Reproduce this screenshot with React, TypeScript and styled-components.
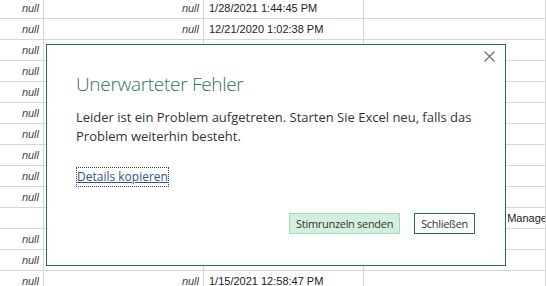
import React from "react";
import styled, { createGlobalStyle } from "styled-components";

const Global = createGlobalStyle`
  html, body { margin: 0; padding: 0; background: #fff; }
  body { width: 546px; height: 286px; overflow: hidden; position: relative; }
  * { box-sizing: border-box; }
`;

const Page = styled.div`
  position: relative;
  width: 546px;
  height: 286px;
  overflow: hidden;
  background: #fff;
`;

const Sheet = styled.div`
  display: grid;
  grid-template-columns: 44px 160px 160px 1fr;
  grid-auto-rows: 21px;
  margin-top: -2px;
  font-family: "Liberation Sans", Arial, sans-serif;
  font-size: 11px;
  color: #222;
`;

const Cell = styled.div<{ $align?: "left" | "right"; $italic?: boolean }>`
  border-right: 1px solid #d6d6d6;
  border-bottom: 1px solid #d6d6d6;
  display: flex;
  align-items: center;
  justify-content: ${(p) => (p.$align === "right" ? "flex-end" : "flex-start")};
  padding: 0 4px 0 5px;
  white-space: nowrap;
  overflow: hidden;
  font-style: ${(p) => (p.$italic ? "italic" : "normal")};
  color: ${(p) => (p.$italic ? "#444" : "#222")};
`;

type Row = { a?: string; b?: string; c?: string; d?: string };

const rows: Row[] = [
  { a: "null", b: "null", c: "1/28/2021 1:44:45 PM" },
  { a: "null", b: "null", c: "12/21/2020 1:02:38 PM" },
  { a: "null" },
  { a: "null" },
  { a: "null" },
  { a: "null" },
  { a: "null" },
  { a: "null" },
  { a: "null" },
  { a: "null" },
  { d: "Dynamics 365 Portal Admin Manager" },
  { a: "null" },
  { a: "null" },
  { a: "null", b: "null", c: "1/15/2021 12:58:47 PM" },
];

const Overlay = styled.div`
  position: absolute;
  left: 46px;
  top: 44px;
  width: 460px;
  height: 222px;
  background: #fff;
  border: 1px solid #217346;
  padding: 25px 30px 0 29px;
  display: flex;
  flex-direction: column;
  font-family: "Open Sans", "Noto Sans", sans-serif;
`;

const CloseButton = styled.button`
  position: absolute;
  top: 6px;
  right: 10px;
  width: 11px;
  height: 11px;
  padding: 0;
  border: none;
  background: transparent;
  display: flex;
`;

const Title = styled.h1`
  margin: 0;
  font-size: 19px;
  letter-spacing: -0.3px;
  line-height: 28px;
  font-weight: 300;
  color: #2f7360;
`;

const Message = styled.p`
  margin: 10px 0 0;
  font-size: 13px;
  line-height: 19px;
  color: #333;
`;

const LinkRow = styled.div`
  margin-top: 21px;
  display: flex;
`;

const CopyLink = styled.a`
  display: inline-block;
  border: 1px dotted #444;
  padding: 0;
  font-size: 12px;
  line-height: 18px;
  color: #2e5591;
  text-decoration: underline;
`;

const Actions = styled.div`
  margin-top: 26px;
  display: flex;
  justify-content: flex-end;
  gap: 14px;
`;

const Button = styled.button<{ $primary?: boolean }>`
  height: 21px;
  padding: 0 6px;
  font-family: "Open Sans", "Noto Sans", sans-serif;
  font-size: 11px;
  letter-spacing: -0.3px;
  line-height: 19px;
  color: #333;
  background: ${(p) => (p.$primary ? "#d3f0df" : "#fff")};
  border: 1px solid ${(p) => (p.$primary ? "#a2dabb" : "#217346")};
  border-radius: 0;
`;

export default function App() {
  return (
    <Page>
      <Global />
      <Sheet>
        {rows.map((r, i) => (
          <React.Fragment key={i}>
            <Cell $align="right" $italic>{r.a}</Cell>
            <Cell $align="right" $italic>{r.b}</Cell>
            <Cell>{r.c}</Cell>
            <Cell>{r.d}</Cell>
          </React.Fragment>
        ))}
      </Sheet>
      <Overlay>
        <CloseButton aria-label="Schließen">
          <svg width="11" height="11" viewBox="0 0 11 11">
            <path d="M0.5 0.5 L10.5 10.5 M10.5 0.5 L0.5 10.5" stroke="#6e6e6e" strokeWidth="1.2" fill="none" />
          </svg>
        </CloseButton>
        <Title>Unerwarteter Fehler</Title>
        <Message>
          Leider ist ein Problem aufgetreten. Starten Sie Excel neu, falls das Problem weiterhin besteht.
        </Message>
        <LinkRow>
          <CopyLink href="#">Details kopieren</CopyLink>
        </LinkRow>
        <Actions>
          <Button $primary>Stimrunzeln senden</Button>
          <Button>Schließen</Button>
        </Actions>
      </Overlay>
    </Page>
  );
}
